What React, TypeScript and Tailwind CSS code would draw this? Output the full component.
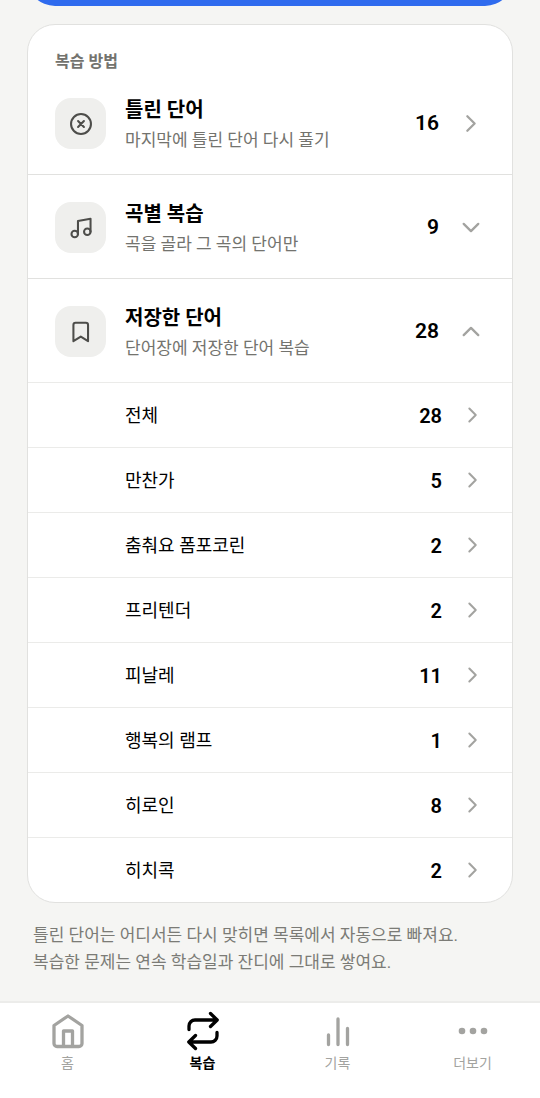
import { useState } from "react";

const songs = [
  { name: "전체", count: 28 },
  { name: "만찬가", count: 5 },
  { name: "춤춰요 폼포코린", count: 2 },
  { name: "프리텐더", count: 2 },
  { name: "피날레", count: 11 },
  { name: "행복의 램프", count: 1 },
  { name: "히로인", count: 8 },
  { name: "히치콕", count: 2 },
];

const methods = [
  { id: "wrong", title: "틀린 단어", desc: "마지막에 틀린 단어 다시 풀기", count: 16 },
  { id: "song", title: "곡별 복습", desc: "곡을 골라 그 곡의 단어만", count: 9 },
  { id: "saved", title: "저장한 단어", desc: "단어장에 저장한 단어 복습", count: 28 },
];

const tabs = [
  { id: "home", label: "홈" },
  { id: "review", label: "복습" },
  { id: "stats", label: "기록" },
  { id: "more", label: "더보기" },
];

function MethodIcon({ id }: { id: string }) {
  return (
    <svg
      viewBox="0 0 24 24"
      className="size-[26px]"
      fill="none"
      stroke="currentColor"
      strokeWidth="1.9"
      strokeLinecap="round"
      strokeLinejoin="round"
      aria-hidden="true">
      {id === "wrong" && (
        <>
          <circle cx="12" cy="12" r="9.2" />
          <path d="m9.3 9.3 5.4 5.4M14.7 9.3l-5.4 5.4" />
        </>
      )}
      {id === "song" && (
        <>
          <path d="M9.2 17.5v-12l11.6-2v12" />
          <circle cx="6.2" cy="17.5" r="3" />
          <circle cx="17.8" cy="15.5" r="3" />
        </>
      )}
      {id === "saved" && (
        <path d="M7 3.5h9.500a2 2 0 0 1 2 2v15l-6.700-4.200L5 20.500v-15a2 2 0 0 1 2-2Z" />
      )}
    </svg>
  );
}

function Chevron({ dir, small }: { dir: "right" | "down" | "up"; small?: boolean }) {
  const paths = { right: "m8 5 7 7-7 7", down: "m4.5 8.5 7 7 7-7", up: "m4.5 15.5 7-7 7 7" };
  return (
    <svg
      viewBox="0 0 24 24"
      className={`shrink-0 text-[#a3a3a0] ${small ? "size-[22px]" : "size-[25px]"}`}
      fill="none"
      stroke="currentColor"
      strokeWidth="2.2"
      strokeLinecap="round"
      strokeLinejoin="round"
      aria-hidden="true">
      <path d={paths[dir]} />
    </svg>
  );
}

function TabIcon({ id }: { id: string }) {
  return (
    <svg
      viewBox="0 0 36 36"
      className="size-9 overflow-visible"
      fill="none"
      stroke="currentColor"
      strokeWidth="3.3"
      strokeLinecap="round"
      strokeLinejoin="round"
      aria-hidden="true">
      {id === "home" && (
        <path d="M4 12.5 18 3l14 9.5v18a3 3 0 0 1-3 3H7a3 3 0 0 1-3-3v-18ZM13.5 33V18h9v15" />
      )}
      {id === "review" && (
        <path d="M4 16.500V13a6 6 0 0 1 6-6h22M25.500.500 32.200 7l-6.700 6.500M32 19.500V23a6 6 0 0 1-6 6H4M10.500 22.500 3.800 29l6.700 6.500" />
      )}
      {id === "stats" && <path d="M8.500 22v9.500M18 6v25.500M27.500 15.500v16" />}
      {id === "more" && (
        <g fill="currentColor" stroke="none">
          <circle cx="7" cy="18" r="3.3" />
          <circle cx="18" cy="18" r="3.3" />
          <circle cx="29" cy="18" r="3.3" />
        </g>
      )}
    </svg>
  );
}

export default function App() {
  const [open, setOpen] = useState("saved");
  const [tab, setTab] = useState("review");

  return (
    <div className="flex min-h-screen flex-col bg-[#f5f5f3] font-['Roboto','Noto_Sans_CJK_KR',sans-serif] text-black">
      <main className="flex-1 px-[27px]">
        <div className="flex h-1.5 items-end overflow-hidden">
          <button type="button" aria-label="복습 시작" className="h-16 w-full shrink-0 rounded-[28px] bg-[#2f6bee]" />
        </div>

        <section className="mt-[18px] overflow-hidden rounded-[28px] border border-[#e1e1df] bg-white">
          <h2 className="px-[27px] pt-7 text-base leading-[18px] font-bold text-[#73736e]">복습 방법</h2>
          {methods.map((m) => (
            <div key={m.id} className="border-b border-[#e1e1df] last:border-b-0">
              <button
                type="button"
                aria-expanded={m.id === "wrong" ? undefined : open === m.id}
                onClick={() => m.id !== "wrong" && setOpen(open === m.id ? "" : m.id)}
                className="flex h-[103px] w-full items-center pt-0.5 pr-7 pl-[27px] text-left">
                <span className="flex size-[51px] shrink-0 items-center justify-center rounded-2xl bg-[#efefed] text-[#4d4d4a]">
                  <MethodIcon id={m.id} />
                </span>
                <span className="ml-[19px] flex flex-1 flex-col">
                  <span className="text-xl leading-8 font-semibold">{m.title}</span>
                  <span className="text-[17px] leading-7 text-[#73736e]">{m.desc}</span>
                </span>
                <span className="mr-5 text-[21px] font-semibold">{m.count}</span>
                <Chevron dir={m.id === "wrong" ? "right" : open === m.id ? "up" : "down"} />
              </button>
              {m.id === "saved" && open === "saved" && (
                <ul>
                  {songs.map((s) => (
                    <li key={s.name} className="border-t border-[#ebebe9]">
                      <button type="button" className="flex h-16 w-full items-center pr-7 pl-[97px] text-left">
                        <span className="flex-1 pt-0.5 text-lg">{s.name}</span>
                        <span className="mr-5 pt-0.5 text-[20px] font-semibold">{s.count}</span>
                        <Chevron dir="right" small />
                      </button>
                    </li>
                  ))}
                </ul>
              )}
            </div>
          ))}
        </section>

        <p className="mt-[19px] px-1.5 pb-6 text-[17px] leading-[27px] text-[#7b7b76]">
          틀린 단어는 어디서든 다시 맞히면 목록에서 자동으로 빠져요.
          <br />
          복습한 문제는 연속 학습일과 잔디에 그대로 쌓여요.
        </p>
      </main>

      <nav className="grid grid-cols-4 border-t-2 border-[#ececea] bg-white pt-2.5 pb-[25px]">
        {tabs.map((t) => (
          <button
            key={t.id}
            type="button"
            onClick={() => setTab(t.id)}
            className={`flex flex-col items-center gap-1 text-sm ${
              tab === t.id ? "font-bold text-black" : "text-[#a3a3a0]"
            }`}>
            <TabIcon id={t.id} />
            {t.label}
          </button>
        ))}
      </nav>
    </div>
  );
}
